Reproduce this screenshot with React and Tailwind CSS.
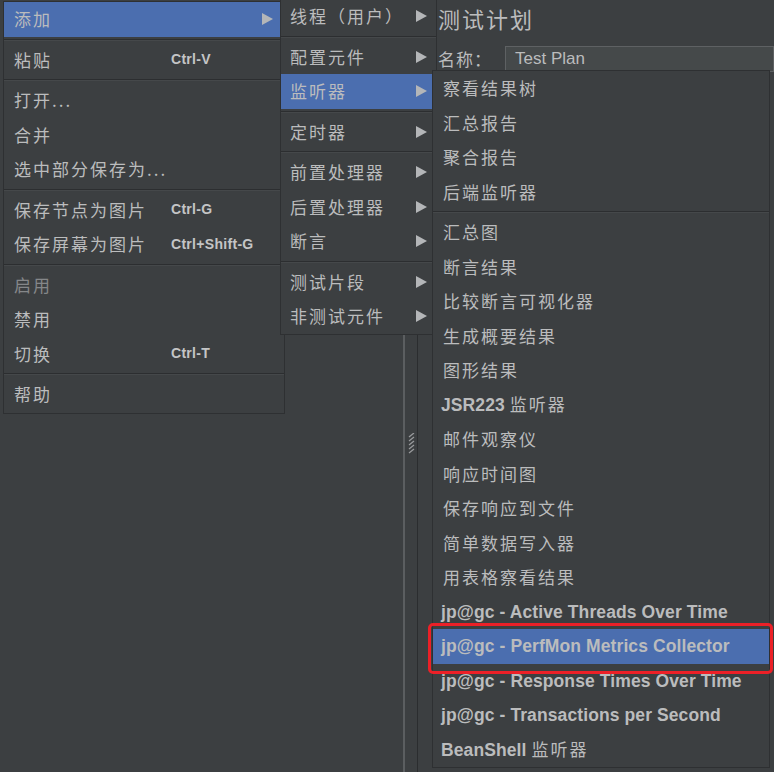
import React from 'react';

const cjk = { fontFamily: '"Noto Sans CJK SC", "Liberation Sans", sans-serif' };
const latin = { fontFamily: '"Liberation Sans", "Noto Sans CJK SC", sans-serif' };

// Small grey triangle used for submenu arrows
const Arrow = () => (
  <svg width="11" height="12" viewBox="0 0 11 12" className="shrink-0">
    <polygon points="0,0 11,6 0,12" fill="#b4b6b8" />
  </svg>
);

const Sep = () => (
  <div className="h-[6px] flex flex-col justify-center">
    <div className="h-px bg-[#2c2e30]" />
    <div className="h-px bg-[#45484a]" />
  </div>
);

const Label = ({ text }) => {
  // split leading latin words (bold) from chinese part
  const m = text.match(/^([A-Za-z0-9@ \-]+?)( ?)([\u4e00-\u9fff].*)?$/);
  if (m && /[A-Za-z]/.test(m[1])) {
    return (
      <span className="whitespace-nowrap">
        <span style={latin} className="font-bold text-[17.5px] tracking-[0.1px]">{m[1] + m[2]}</span>
        {m[3] && <span style={cjk} className="text-[17px] tracking-[2px]">{m[3]}</span>}
      </span>
    );
  }
  return <span style={cjk} className="text-[17px] tracking-[2px] whitespace-nowrap">{text}</span>;
};

const Item = ({ text, shortcut, arrow, active, disabled, pl = 'pl-[10px]', pr = 'pr-[11px]' }) => (
  <div
    className={`h-[34.5px] flex items-center ${pl} ${pr} ${active ? 'bg-[#4b6eaf]' : ''} ${
      disabled ? 'text-[#858789]' : 'text-[#bbbcbd]'
    }`}
  >
    <div className={shortcut !== undefined ? 'w-[157px] shrink-0' : ''}>
      <Label text={text} />
    </div>
    {shortcut && (
      <span style={latin} className="text-[14px] font-bold tracking-[0.3px] text-[#c4c5c6] whitespace-nowrap">
        {shortcut}
      </span>
    )}
    {arrow && (
      <div className="ml-auto">
        <Arrow />
      </div>
    )}
  </div>
);

const menu1 = [
  { text: '添加', arrow: true, active: true },
  'sep',
  { text: '粘贴', shortcut: 'Ctrl-V' },
  'sep',
  { text: '打开...' },
  { text: '合并' },
  { text: '选中部分保存为...' },
  'sep',
  { text: '保存节点为图片', shortcut: 'Ctrl-G' },
  { text: '保存屏幕为图片', shortcut: 'Ctrl+Shift-G' },
  'sep',
  { text: '启用', disabled: true },
  { text: '禁用' },
  { text: '切换', shortcut: 'Ctrl-T' },
  'sep',
  { text: '帮助' },
];

const menu2 = [
  { text: '线程（用户）', arrow: true },
  'sep',
  { text: '配置元件', arrow: true },
  { text: '监听器', arrow: true, active: true },
  'sep',
  { text: '定时器', arrow: true },
  'sep',
  { text: '前置处理器', arrow: true },
  { text: '后置处理器', arrow: true },
  { text: '断言', arrow: true },
  'sep',
  { text: '测试片段', arrow: true },
  { text: '非测试元件', arrow: true },
];

const menu3 = [
  '察看结果树',
  '汇总报告',
  '聚合报告',
  '后端监听器',
  'sep',
  '汇总图',
  '断言结果',
  '比较断言可视化器',
  '生成概要结果',
  '图形结果',
  'JSR223 监听器',
  '邮件观察仪',
  '响应时间图',
  '保存响应到文件',
  '简单数据写入器',
  '用表格察看结果',
  'jp@gc - Active Threads Over Time',
  'jp@gc - PerfMon Metrics Collector',
  'jp@gc - Response Times Over Time',
  'jp@gc - Transactions per Second',
  'BeanShell 监听器',
];

export default function App() {
  return (
    <div className="relative w-[774px] h-[772px] overflow-hidden bg-[#3c3f41] flex">
      {/* left tree panel */}
      <div className="w-[403px] shrink-0" />

      {/* splitter */}
      <div className="w-[15px] shrink-0 border-l-2 border-[#5b5e60] border-r border-r-[#2b2d2f] flex justify-center pt-[433px]">
        <svg width="7" height="22" viewBox="0 0 7 22">
          {[0, 4, 8, 12, 16].map((y) => (
            <line key={y} x1="1" y1={y + 4} x2="6" y2={y} stroke="#9a9c9e" strokeWidth="1.3" />
          ))}
        </svg>
      </div>

      {/* right content panel */}
      <div className="flex-1 pl-[20px] pt-[3px]">
        <div style={cjk} className="text-[22px] tracking-[2px] text-[#bbbcbd] leading-[30px]">
          测试计划
        </div>
        <div className="flex items-center mt-[13px]">
          <span style={cjk} className="w-[67px] text-[17px] tracking-[1px] text-[#bbbcbd]">
            名称：
          </span>
          <div className="flex-1 h-[26px] bg-[#45494a] border border-[#5e6163] flex items-center pl-[9px]">
            <span style={latin} className="text-[17px] text-[#bbbcbd]">
              Test Plan
            </span>
          </div>
        </div>
      </div>

      {/* popup menu 1 */}
      <div className="absolute left-[3px] top-px w-[282px] h-[413px] bg-[#3c3f41] border border-[#2e3032]">
        {menu1.map((it, i) =>
          it === 'sep' ? <Sep key={i} /> : <Item key={i} {...it} pr="pr-[11px]" />
        )}
      </div>

      {/* popup menu 2 */}
      <div className="absolute left-[280px] top-[-2px] w-[157px] h-[337px] bg-[#3c3f41] border border-[#2e3032]">
        {menu2.map((it, i) =>
          it === 'sep' ? <Sep key={i} /> : <Item key={i} {...it} pl="pl-[9px]" pr="pr-[9px]" />
        )}
      </div>

      {/* popup menu 3 */}
      <div className="absolute left-[432px] top-[70px] w-[338px] h-[698px] bg-[#3c3f41] border border-[#2e3032]">
        {menu3.map((t, i) =>
          t === 'sep' ? (
            <Sep key={i} />
          ) : (
            <Item
              key={i}
              text={t}
              active={t.includes('PerfMon')}
              pl={/^[A-Za-z]/.test(t) ? 'pl-[8px]' : 'pl-[10px]'}
            />
          )
        )}
      </div>

      {/* red annotation box */}
      <div className="absolute left-[428px] top-[623px] w-[345px] h-[51px] border-[3px] border-[#ec2027] rounded-[5px]" />
    </div>
  );
}
